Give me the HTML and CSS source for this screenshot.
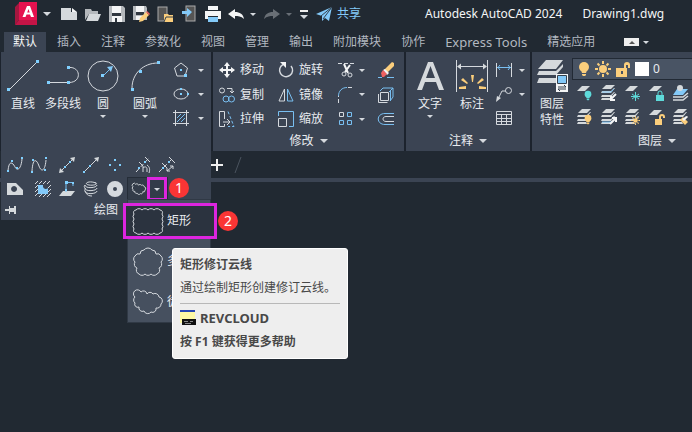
FILE: index.html
```html
<!DOCTYPE html>
<html lang="zh-CN">
<head>
<meta charset="utf-8">
<title>Autodesk AutoCAD 2024 - Drawing1.dwg</title>
<link rel="stylesheet" href="styles.css">
</head>
<body>
<svg class="defs" aria-hidden="true">
  <symbol id="sheet" viewBox="0 0 16 16"><path class="solid" d="M6 1h8l-5 5H1z"/></symbol>
  <symbol id="stack" viewBox="0 0 16 16"><path class="solid" d="M6 0h9l-4 4H2zM2 6h9l3-3h1l-4 5H1zM2 10h9l3-3h1l-4 5H1zM2 13h8l1 2H1z"/></symbol>
  <symbol id="bulb" viewBox="0 0 12 16"><circle cx="6" cy="6" r="5"/><path d="M3 9h6l-1 3H4zM4 13h4v1l-1 1H5l-1-1z"/></symbol>
  <symbol id="sun" viewBox="0 0 16 16"><circle cx="8" cy="8" r="4"/><path class="rays" d="M8 0v3M8 13v3M0 8h3M13 8h3M2.500 2.500l2 2M11.500 11.500l2 2M2.500 13.500l2-2M11.500 4.500l2-2"/></symbol>
  <symbol id="cloud" viewBox="0 0 34 30"><path d="M4 10a4 4 0 1 1 6-5a3.500 3.500 0 0 1 6 2a3.500 3.500 0 0 1 6 0a4 4 0 0 1 6 3a4 4 0 0 1 2 7a4 4 0 0 1-5 4a3.500 3.500 0 0 1-5 4a4 4 0 0 1-7-1a3.500 3.500 0 0 1-5-4a3 3 0 0 1-4-4a4 4 0 0 1 0-6"/></symbol>
</svg>

<header class="titlebar">
  <button class="app" aria-label="应用程序"><svg width="24" height="24" viewBox="0 0 24 24"><path fill="#a5173f" stroke="none" d="M0 5l4-4v17l-4 5z"/><path fill="#e5124f" stroke="none" d="M4 0h18v18H4z"/><path fill="#c41446" stroke="none" d="M0 23l4-5h18v5z"/><path fill="#fff" stroke="none" fill-rule="evenodd" d="M12 4h3l4 11h-3l-1-2.500h-3.500L10.500 15h-3zM13.500 7l-1.300 3.500h2.500z"/></svg><i class="caret"></i></button>
  <nav class="quick" aria-label="快速访问">
    <button aria-label="新建"><svg width="18" height="18"><path class="solid" d="M1 3h10v4h6v8H1z"/><path class="white" d="M12 3l5 4h-5z"/></svg></button>
    <button aria-label="打开"><svg width="18" height="18"><path class="dim" d="M1 4h6l1 2h6v3H5l-4 6z"/><path class="solid" d="M5 9h12l-3 7H2z"/></svg></button>
    <button aria-label="保存"><svg width="18" height="18"><path class="dim" d="M1 1h14l2 2v14H1z"/><path class="white" d="M4 1h9v7H4zM4 11h10v6H4z"/><path class="dark" d="M4 8h9v3H4zM7 13h2v4H7z"/></svg></button>
    <button aria-label="另存为"><svg width="18" height="18"><path class="dim" d="M1 1h13l1 2v12H1z"/><path class="white" d="M4 1h8v6H4zM4 11h6v4H4z"/><path class="dark" d="M4 7h8v3H4z"/><path class="gold" d="M8 13l6-6 3 3-6 6-4 1z"/><path class="red" d="M14 7l1-1 3 3-1 1z"/></svg></button>
    <button aria-label="从移动设备打开"><svg width="18" height="18"><rect class="frame" x="2" y="2" width="9" height="14"/><path class="gold" d="M8 9h4l1 1h4v7H8z"/><path class="dark-line" d="M8 17l2-5h7"/></svg></button>
    <button aria-label="保存到移动设备"><svg width="18" height="18"><rect class="frame" x="6" y="1" width="9" height="15"/><path class="sky" d="M2 6h5V3l5 4-5 5V9H2z"/></svg></button>
    <button aria-label="打印"><svg width="18" height="18"><path class="white" d="M4 1h10v4H4zM1 6h16v8h-3v-3H4v3H1z"/><path class="sky" d="M4 12h10v5H4z"/></svg></button>
  </nav>
  <nav class="history" aria-label="历史">
    <button aria-label="放弃"><svg width="16" height="14"><path class="white" d="M0 7l7-5v3c5 0 8 2 9 7-3-3-6-3-9-3v3z"/></svg><i class="caret"></i></button>
    <button class="off" aria-label="重做"><svg width="16" height="14"><path class="solid" d="M16 7L9 2v3C4 5 1 7 0 12c3-3 6-3 9-3v3z"/></svg><i class="caret"></i></button>
    <button class="custom" aria-label="自定义"><i class="caret"></i></button>
  </nav>
  <button class="share"><svg width="16" height="16"><path class="sky" d="M0 8l16-7-10 9zM6 10L16 1l-3 14-4-3-3 3z"/><path class="dark-line" d="M5 10l11-9L7 13"/></svg>共享</button>
  <h1><span>Autodesk AutoCAD 2024</span><span>Drawing1.dwg</span></h1>
</header>

<nav class="tabs" aria-label="功能区选项卡">
  <button class="active">默认</button><button>插入</button><button>注释</button><button>参数化</button><button>视图</button><button>管理</button><button>输出</button><button>附加模块</button><button>协作</button><button class="latin">Express Tools</button><button>精选应用</button>
  <button class="collapse" aria-label="最小化功能区"><b><i class="caret up"></i></b><i class="caret"></i></button>
</nav>

<main class="ribbon">
  <section class="panel draw" aria-label="绘图">
    <div class="tools">
      <button class="big"><svg width="32" height="32"><path d="M2 30L30 2"/><path class="dot" d="M0 28h3v3H0zM29 0h3v3h-3z"/></svg>直线</button>
      <button class="big"><svg width="32" height="32"><path d="M2 22.500h20M22 7.500c12-1 13 15 0 15"/><path class="dot" d="M0 21h3v3H0zM20 21h3v3h-3zM20 6h3v3h-3z"/></svg>多段线</button>
      <button class="big"><svg width="32" height="32"><circle cx="16" cy="16" r="15"/><path class="b" d="M17 15l6-6"/><path class="sky" d="M20 7l6-1-2 6z"/><path class="dot" d="M14 14h3v3h-3z"/></svg>圆<i class="caret"></i></button>
      <button class="big"><svg width="32" height="32"><path d="M3 28C3 14 14 3 29 3"/><path class="dot" d="M2 28h3v3H2zM10 10h3v3h-3zM28 1h3v3h-3z"/></svg>圆弧<i class="caret"></i></button>
      <div class="mini">
        <button aria-label="多边形"><svg width="16" height="16"><path d="M8 1l6.500 5-2.500 8H4L1.500 6z"/><path class="dot" d="M7 7h2v2H7zM11 12h3v3h-3z"/></svg><i class="caret"></i></button>
        <button aria-label="椭圆"><svg width="16" height="16"><ellipse cx="8" cy="8" rx="7" ry="5"/><path class="dot" d="M7 2h2v2H7zM7 7h2v2H7zM14 7h2v2h-2z"/></svg><i class="caret"></i></button>
        <button aria-label="图案填充"><svg width="16" height="16"><path d="M2.500 0v16M13.500 0v16M0 2.500h16M0 13.500h16"/><path class="b" d="M4 8l4-4M4 12l8-8M8 12l4-4"/></svg><i class="caret"></i></button>
      </div>
    </div>
    <div class="slideout">
      <div class="row">
        <button aria-label="样条曲线拟合"><svg width="16" height="16"><path d="M1 14c1-12 5-8 7-4s6 3 7-8"/><path class="dot" d="M0 13h2v2H0zM4 3h2v2H4zM9 10h2v2H9zM14 0h2v2h-2z"/></svg></button>
        <button aria-label="样条曲线控制点"><svg width="16" height="16"><path d="M1 14C2-1 6 3 8 9s6 6 7-6"/><path class="dot" d="M0 14h2v2H0zM1 2h2v2H1zM13 12h2v2h-2zM14 0h2v2h-2z"/></svg></button>
        <button class="wide" aria-label="构造线"><svg width="16" height="16"><path d="M2 14L14 2"/><path class="solid" d="M11 1l5-1-1 5zM0 16l1-5 4 4z"/><path class="dot" d="M5 9h2v2H5zM10 4h2v2h-2z"/></svg></button>
        <button aria-label="射线"><svg width="16" height="16"><path d="M2 14L14 2"/><path class="solid" d="M11 1l5-1-1 5z"/><path class="dot" d="M0 14h2v2H0zM6 8h2v2H6z"/></svg></button>
        <button aria-label="多点"><svg width="16" height="16"><path class="dot" d="M7 2h2v2H7zM2 7h2v2H2zM12 7h2v2h-2zM7 12h2v2H7z"/></svg></button>
        <button class="wide" aria-label="定数等分"><svg width="16" height="16"><path stroke-dasharray="4 3" d="M1 15L14 1"/><path d="M4 5l4 4M10 0l5 5M8 15V9M8 11c2-2 4-1 4 1v3M12 8c3 2 3 5 2 8"/><path class="dot" d="M3 10h2v2H3zM9 4h2v2H9z"/></svg></button>
        <button aria-label="定距等分"><svg width="16" height="16"><path stroke-dasharray="4 3" d="M0 15L14 1"/><path d="M3 6l5 5M10 0l6 6M8 14l6-5M8 14v-3M8 14h3M14 9v3M14 9h-3"/><path class="dot" d="M3 10h2v2H3zM9 4h2v2H9z"/></svg></button>
      </div>
      <div class="row">
        <button aria-label="区域"><svg width="16" height="16"><path class="solid" fill-rule="evenodd" d="M0 2h9l7 7v5H0zM7 5a3 3 0 1 0 .1 0z"/></svg></button>
        <button class="wide" aria-label="边界"><svg width="16" height="16"><path d="M0 3l3-3M4 3l3-3M8 3l3-3M12 3l3-3M0 7l3-3M0 11l3-3M0 15l3-3M4 16l3-3M8 16l3-3M12 16l4-4M13 7l3-3M13 11l3-3"/><path class="sky" d="M3 4h5v2a3 3 0 0 0 5 1v6H3z"/></svg></button>
        <button aria-label="区域覆盖"><svg width="16" height="16"><path class="solid" d="M4 10h12l-4 5H0z"/><path class="b" d="M7 11V1.500h7V5"/><path class="dot" d="M6 0h3v3H6zM13 1h2v2h-2zM6 8h2v2H6z"/></svg></button>
        <button aria-label="螺旋"><svg width="16" height="16"><path d="M13 2C5-1 0 3 6 4s10-2 6-2M2 4c0 4 12 3 12 0M2 7c0 4 12 3 12 0M2 10c0 4 12 3 12 0M2 4c-1 1-1 2 0 3s-1 2 0 3 1 5 7 5"/></svg></button>
        <button aria-label="圆环"><svg width="16" height="16"><circle class="ring" cx="8" cy="8" r="5"/></svg></button>
        <span class="split"><button aria-label="修订云线"><svg class="bold" width="16" height="14"><use href="#cloud"/></svg></button><button class="arrow" aria-label="修订云线选项"><i class="caret"></i></button><em class="number">1</em></span>
      </div>
      <footer><svg width="12" height="10"><path class="solid" d="M0 4h4V1h1v2h4V1h2v8H9V7H5v2H4V6H0z"/></svg><span>绘图</span></footer>
      <div class="menu">
        <button class="current"><svg width="34" height="30"><path d="M5 4a4 4 0 0 1 6 0a4 4 0 0 1 6 0a4 4 0 0 1 6 0a4 4 0 0 1 6 0a2.500 2.500 0 0 1 2 4a4 4 0 0 1 0 5a4 4 0 0 1 0 5a4 4 0 0 1 0 5a2.500 2.500 0 0 1-2 4a4 4 0 0 1-6 0a4 4 0 0 1-6 0a4 4 0 0 1-6 0a4 4 0 0 1-6 0a2.500 2.500 0 0 1-2-4a4 4 0 0 1 0-5a4 4 0 0 1 0-5a4 4 0 0 1 0-5a2.500 2.500 0 0 1 2-4"/></svg>矩形<em class="number">2</em></button>
        <button><svg width="34" height="32"><path d="M13 5a5 5 0 0 1 8 0a4 4 0 0 1 4 4a4 4 0 0 1 5 2a4 4 0 0 1 0 6a4 4 0 0 1-2 6a4 4 0 0 1-2 6a4 4 0 0 1-6 0a4 4 0 0 1-6 0a4 4 0 0 1-6 0a4 4 0 0 1-2-6a4 4 0 0 1-2-6a4 4 0 0 1 0-6a4 4 0 0 1 5-2a4 4 0 0 1 4-4"/></svg>多边形</button>
        <button><svg width="34" height="30"><use href="#cloud"/></svg>徒手画</button>
        <aside class="tip" role="tooltip">
          <h2>矩形修订云线</h2>
          <p>通过绘制矩形创建修订云线。</p>
          <hr>
          <h2 class="command"><svg width="16" height="16"><path fill="#fff9a5" stroke="none" d="M0 1h15v12H0z"/><path fill="#2846b4" stroke="none" d="M0 0h15v2H0z"/><path fill="#111" stroke="none" d="M2 9h14v6H2z"/><path stroke="#888" d="M4 11.500h4M10 11.500h3M5 13.500h6"/></svg>REVCLOUD</h2>
          <h2>按 F1 键获得更多帮助</h2>
        </aside>
      </div>
    </div>
  </section>

  <section class="panel modify" aria-label="修改">
    <div class="tools">
      <button><svg width="16" height="16"><path class="heavy" d="M8 2v12M2 8h12"/><path class="white" d="M5 4l3-4 3 4zM5 12l3 4 3-4zM4 5L0 8l4 3zM12 5l4 3-4 3z"/></svg>移动</button>
      <button><svg width="16" height="16"><path class="medium" d="M13 4a6.500 6.500 0 1 1-8-1.500"/><path class="white" d="M2 0h6v6z"/></svg>旋转</button>
      <button aria-label="修剪"><svg width="16" height="16"><path stroke-dasharray="4 2" d="M0 1.500h16"/><path class="heavy" d="M6 2l4 9M12 3l-5 7"/><circle cx="6" cy="12" r="2"/><circle cx="12" cy="13" r="2"/></svg><i class="caret"></i></button>
      <button aria-label="删除"><svg width="16" height="16"><path class="gold" d="M6 8l8-8 2 1v3l-7 7z"/><path class="white" d="M5 8l2-1 4 4-2 2z"/><path class="red" d="M3 11l2-3 4 4-3 3H4z"/><path class="b" d="M0 15.500h4M9 15.500h7"/></svg></button>
      <button><svg width="16" height="16"><circle cx="3" cy="3.500" r="2.500"/><path d="M8 1.500h5V6M11 4l2 2 2-2"/><circle class="b" cx="7" cy="12" r="3"/><circle class="b" cx="12.500" cy="12" r="3"/></svg>复制</button>
      <button><svg width="16" height="16"><path d="M6.500 2v12H1z"/><path class="b" d="M9.500 2v12H15z"/></svg>镜像</button>
      <button aria-label="圆角"><svg width="16" height="16"><path class="b" d="M.5 9C.5 4 4 .5 9 .5"/><path stroke-dasharray="4 2" d="M.5 16V9M10 .5h6"/></svg><i class="caret"></i></button>
      <button aria-label="分解"><svg width="16" height="16"><path d="M2.500 5.500h8v8h-8zM.5 7v8.500h9"/><path class="b" d="M2 4l3-3h10v9l-3 4M15 1l-4 4M12.500 4v10"/></svg></button>
      <button><svg width="16" height="16"><path d="M.5 12V.5h5V8M.5 12v3.500h5V13M4 11h6M8 8l3 3-3 3"/><path class="b" stroke-dasharray="3 2" d="M9 .5l6 15H9"/></svg>拉伸</button>
      <button><svg width="16" height="16"><path class="b" d="M.5 5V.5h15v15H11"/><path d="M.5 7.500h8v8h-8z"/></svg>缩放</button>
      <button aria-label="阵列"><svg width="16" height="16"><path d="M1.500 1.500h4v4h-4z"/><path class="b" d="M9.500 1.500h4v4h-4zM1.500 9.500h4v4h-4zM9.500 9.500h4v4h-4z"/></svg><i class="caret"></i></button>
      <button aria-label="偏移"><svg width="16" height="16"><path class="b" d="M16 2.500H7c-9 0-9 11 0 11h9"/><path d="M16 5.500H8c-4 0-4 5 0 5h8"/></svg></button>
    </div>
    <button class="foot">修改<i class="caret large"></i></button>
  </section>

  <section class="panel annotate" aria-label="注释">
    <div class="tools">
      <button class="big"><svg width="32" height="32"><path class="solid" fill-rule="evenodd" d="M14 2h5l11 28h-5l-3-8H11l-3 8H3zM16.500 6L12 18h9z"/></svg>文字<i class="caret"></i></button>
      <button class="big"><svg width="32" height="32"><path d="M.5 0v32M31.500 0v32M2 6.500h28"/><path class="solid" d="M1 6.500l4-3v6zM31 6.500l-4-3v6z"/><path class="gold" d="M15 15h3l-1 7h-1zM7 18l5 5-1 1-6-4zM26 18l-5 5 1 1 6-4zM3 27l7-1v3H3zM30 27l-7-1v3h7z"/></svg>标注</button>
      <div class="mini">
        <button aria-label="线性"><svg width="16" height="16"><path d="M.5 1v14M15.500 1v14"/><path class="b" d="M1 5.500h14M4 3L2 5.500 4 8M12 3l2 2.500L12 8"/></svg><i class="caret"></i></button>
        <button aria-label="引线"><svg width="16" height="16"><path d="M2 13l4-8h4"/><circle cx="12.500" cy="4.500" r="3"/><path class="solid" d="M0 16l1-6 4 2z"/></svg><i class="caret"></i></button>
        <button aria-label="表格"><svg width="16" height="16"><path d="M.5 1.500h15v13H.5zM0 4.500h16M0 8.500h16M0 11.500h16M5.500 5v9M10.500 5v9"/></svg></button>
      </div>
    </div>
    <button class="foot">注释<i class="caret large"></i></button>
  </section>

  <section class="panel layers" aria-label="图层">
    <div class="tools">
      <button class="big"><svg width="32" height="32"><path class="solid" d="M10 0h17l-7 9H2zM3 11h17l7-7v3l-7 8H1zM3 18h17v5H1z"/><path class="white" d="M20 14h12v18H20z"/><path class="sky" d="M22 16h8v7h-8z"/><path class="dark-line" d="M21.500 15.500h9v8h-9zM22 27h8l-2-2M30 29h-8l2 2"/></svg>图层<br>特性</button>
      <div class="state">
        <button class="combo"><svg class="amber" width="14" height="16"><use href="#bulb"/></svg><svg class="amber" width="16" height="16"><use href="#sun"/></svg><svg width="16" height="16"><path class="gold" fill-rule="evenodd" d="M1 7h8V4a3 3 0 0 1 6 0v3h-2V4h-2v3h1v9H1zM6 10v3h2v-3z"/></svg><i class="swatch"></i>0</button>
        <div class="grid">
          <button aria-label="关"><svg width="16" height="16"><use href="#sheet"/><svg class="teal" x="8" y="5" width="8" height="11"><use href="#bulb"/></svg></svg></button>
          <button aria-label="隔离"><svg width="16" height="16"><use href="#stack"/><path class="b" d="M14 4l-3 3H2"/><path class="heavy" d="M16 9l-5 5M11 11v4h4"/></svg></button>
          <button aria-label="冻结"><svg width="16" height="16"><use href="#sheet"/><path class="ice" d="M11.500 7v9M8 9l7 5M8 14l7-5M7 11.500h9"/></svg></button>
          <button aria-label="锁定"><svg width="16" height="16"><use href="#sheet"/><path class="ice" d="M10 10V8a2 2 0 0 1 4 0v2"/><path class="mint" d="M8 10h8v6H8z"/></svg></button>
          <button aria-label="置为当前"><svg width="16" height="16"><path class="sky" d="M5 4h11l-5 6H1z"/><circle class="solid" cx="8" cy="3" r="3"/><path class="medium" d="M16 8l-5 4H1M16 11l-5 4H1"/></svg></button>
          <button aria-label="打开所有图层"><svg width="16" height="16"><use href="#stack"/><svg class="amber" x="8" y="5" width="8" height="11"><use href="#bulb"/></svg></svg></button>
          <button aria-label="取消隔离"><svg width="16" height="16"><use href="#stack"/><path class="b" d="M12 12l-1 1H2"/><path class="heavy" d="M10 15l5-5M12 9h4v4"/></svg></button>
          <button aria-label="解冻"><svg width="16" height="16"><use href="#stack"/><svg class="amber" x="7" y="7" width="9" height="9"><use href="#sun"/></svg></svg></button>
          <button aria-label="解锁"><svg width="16" height="16"><use href="#sheet"/><path class="amber-line" d="M12 10V8a2 2 0 0 1 4 0v1"/><path class="gold" d="M7 10h7v6H7z"/></svg></button>
          <button aria-label="匹配图层"><svg width="16" height="16"><use href="#stack"/><path class="gold" d="M8 11l3-3 5 5-3 3z"/><path class="white" d="M10 10l5-3 1 1-4 4z"/></svg></button>
        </div>
      </div>
    </div>
    <button class="foot">图层<i class="caret large"></i></button>
  </section>
</main>

<nav class="files" aria-label="文件选项卡"><button aria-label="新图形"><svg width="14" height="14"><path class="plus" d="M7 1v12M1 7h12"/></svg></button><svg width="8" height="18"><path class="slash" d="M1 17L7 1"/></svg></nav>
</body>
</html>
```
FILE: styles.css
```css
* { box-sizing: border-box; }

body {
  margin: 0;
  min-height: 100vh;
  overflow: hidden;
  background: #212932;
  color: #e8ebef;
  font: 12px/16px "Noto Sans", "Noto Sans CJK SC", sans-serif;
}

button {
  display: flex;
  align-items: center;
  padding: 0;
  border: 0;
  background: none;
  color: inherit;
  font: inherit;
  white-space: nowrap;
}

svg { display: block; flex: none; fill: none; stroke: #d5d9de; overflow: visible; }
.defs { position: absolute; width: 0; height: 0; }
.solid { fill: #d5d9dc; stroke: none; }
.white { fill: #f4f5f6; stroke: none; }
.dim { fill: #b4b8bc; stroke: none; }
.dark { fill: #303740; stroke: none; }
.gold, .amber { fill: #fbce7c; stroke: none; }
.red { fill: #ee6262; stroke: none; }
.sky { fill: #83c9f8; stroke: none; }
.dot { fill: #80d0ff; stroke: none; }
.mint, .teal { fill: #5edada; stroke: none; }
.b { stroke: #79bff1; }
.ice { stroke: #5edada; }
.amber-line { stroke: #fbce7c; stroke-width: 2; }
.dark-line { stroke: #34404d; }
.frame { fill: #555; stroke: #aaa; }
.bold { stroke-width: 2; }
.medium { stroke-width: 1.5; }
.heavy { stroke: #f4f5f6; stroke-width: 2; }
.rays { stroke: #fbce7c; stroke-width: 2; }
.ring { stroke-width: 6; }
.plus { stroke: #eee; stroke-width: 2; }
.slash { stroke: #4a535e; }

.caret {
  flex: none;
  width: 0;
  height: 0;
  border: solid transparent;
  border-width: 3px 3px 0;
  border-top-color: #d5d9de;
}
.caret.large { border-width: 4px 4px 0; }
.caret.up { border-width: 0 3px 3px; border-bottom-color: #555; }

.titlebar { display: flex; align-items: center; height: 28px; padding-left: 15px; color: #f4f5f6; }
.app { gap: 4px; width: 45px; }
.app .caret { border-width: 4px 4px 0; }
.quick { display: flex; gap: 6px; }
.history { display: flex; align-items: center; gap: 8px; margin-left: 6px; }
.history button { gap: 6px; }
.history .off { opacity: .4; }
.history .custom { padding-top: 3px; border-top: 2px solid #eee; }
.custom .caret { border-width: 4px 4px 0; }
.share { gap: 5px; margin-left: 8px; color: #83c9f8; }
h1 { display: flex; gap: 20px; margin: 0 0 0 64px; font-size: 12px; font-weight: 400; white-space: nowrap; }

.tabs { display: flex; height: 24px; padding: 4px 0 0 4px; color: #b2b8c0; }
.tabs button { padding: 0 10px; }
.tabs .active { background: #3b4453; color: #f4f5f6; padding: 0 9px; margin-right: 1px; }
.tabs .latin { font-size: 13px; }
.tabs .collapse { gap: 4px; margin-left: 9px; }
.collapse b { display: grid; place-items: center; width: 15px; height: 8px; background: #eee; }

.ribbon { display: flex; gap: 2px; height: 99px; padding-left: 1px; background: #1c232d; }
.panel { display: flex; flex: none; flex-direction: column; background: #3b4453; }
.tools { display: grid; align-items: start; height: 80px; padding-top: 6px; }
.tools button { height: 24px; gap: 5px; }
.tools .big { flex-direction: column; height: auto; gap: 0; padding-top: 2px; }
.big svg { margin-bottom: 4px; }
.big .caret { margin-top: 3px; }
.mini { display: grid; }
.mini button { gap: 9px; }
.foot { justify-content: center; gap: 6px; height: 18px; }

.draw { position: relative; width: 210px; }
.draw .tools { grid-template-columns: 44px 36px 44px 40px 36px; }
.draw .mini { padding-left: 8px; }
.slideout { position: absolute; top: 98px; left: 0; z-index: 1; width: 100%; height: 70px; padding-top: 3px; background: #3b4453; }
.row { display: flex; align-items: center; gap: 8px; height: 24px; padding-left: 6px; }
.row .wide { margin-left: 4px; }
.split { position: relative; display: flex; height: 24px; margin-left: -4px; padding-left: 3px; border: 1px solid #252d38; background: #333c49; }
.split .arrow { justify-content: center; width: 20px; height: 24px; margin-top: -1px; border: 3px solid #dd25df; }
.slideout footer { display: flex; align-items: center; gap: 77px; height: 18px; padding-left: 4px; }

.menu { position: absolute; top: 49px; left: 126px; z-index: 2; width: 84px; border: 1px solid #303945; background: #46505f; }
.menu > button { position: relative; gap: 2px; width: 100%; height: 41px; padding-left: 3px; }
.menu > .current { width: 94px; height: 36px; margin: 3px 0 1px -5px; padding-left: 5px; border: 3px solid #dd25df; background: #2b333f; }
.number { position: absolute; right: -24px; width: 20px; height: 20px; border-radius: 50%; background: #fa3535; color: #fff; font: 14px/20px "Noto Sans", sans-serif; text-align: center; }
.split .number { top: 0; right: -22px; }

.tip { position: absolute; top: 48px; left: 44px; width: 176px; padding: 8px 7px; border: 1px solid #fff; border-radius: 3px; background: #eee; color: #484848; }
.tip h2 { margin: 0; font-size: 12px; font-weight: 700; line-height: 16px; white-space: nowrap; }
.tip p { margin: 7px 0; white-space: nowrap; }
.tip hr { height: 1px; margin: 0 0 6px; border: 0; background: #b8b8b8; }
.tip .command { display: flex; gap: 4px; margin-bottom: 8px; font-size: 13px; }

.modify { width: 191px; }
.modify .tools { grid-template-columns: 59px 60px 40px 20px; padding-left: 6px; }
.annotate { width: 124px; }
.annotate .tools { grid-template-columns: 44px 40px 34px; padding-left: 2px; }
.annotate .mini { padding-left: 4px; }
.annotate .mini button { gap: 7px; }
.layers { flex: 1; min-width: 0; }
.layers .tools { grid-template-columns: 40px 1fr; }
.layers .foot { padding-left: 90px; }
.tools .combo { width: 100%; height: 22px; padding-left: 4px; gap: 4px; border: 1px solid #222a35; border-right: 0; background: #495464; }
.swatch { width: 14px; height: 14px; background: #fff; }
.state .grid { display: grid; grid-template-columns: repeat(4, 24px) 16px; padding: 1px 0 0 4px; }

.files { display: flex; align-items: center; gap: 10px; height: 31px; padding-left: 210px; border-bottom: 4px solid #3b4453; background: #212932; }
```
